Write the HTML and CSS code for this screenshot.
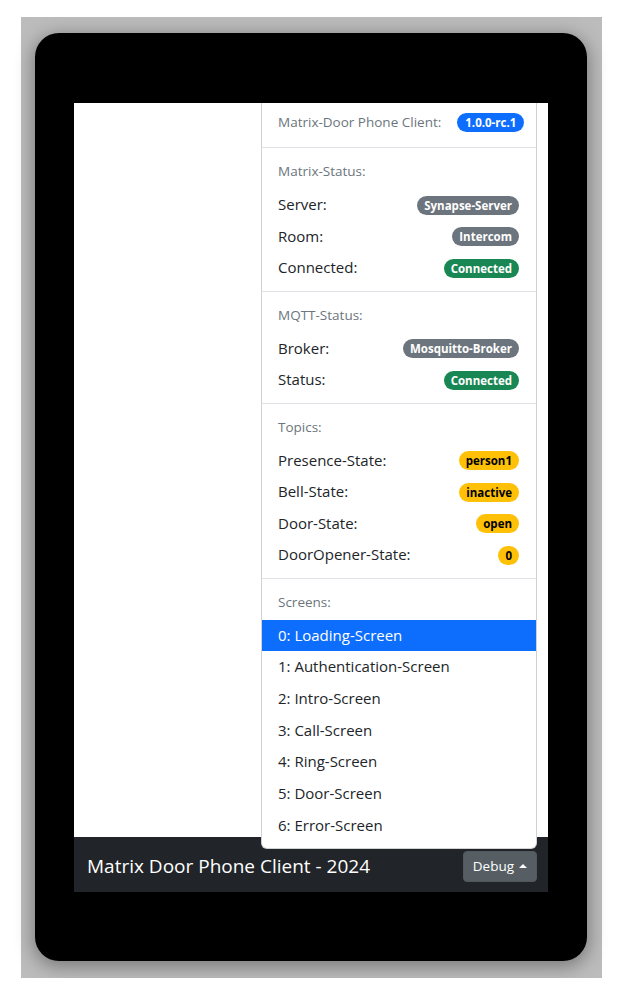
FILE: index.html
```html
<!DOCTYPE html>
<html lang="en">
<head>
<meta charset="utf-8">
<title>Matrix Door Phone Client</title>
<link rel="stylesheet" href="styles.css">
</head>
<body>
<div class="stage">
  <div class="device">
    <div class="screen">
      <main class="content"></main>
      <footer class="footer">
        <span class="footer-title">Matrix Door Phone Client - 2024</span>
        <div class="dropup">
          <ul class="menu">
            <li class="menu-header version">Matrix-Door Phone Client:<span class="badge bg-blue">1.0.0-rc.1</span></li>
            <li class="divider"></li>
            <li class="menu-header">Matrix-Status:</li>
            <li class="row"><span>Server:</span><span class="badge bg-gray">Synapse-Server</span></li>
            <li class="row"><span>Room:</span><span class="badge bg-gray">Intercom</span></li>
            <li class="row"><span>Connected:</span><span class="badge bg-green">Connected</span></li>
            <li class="divider"></li>
            <li class="menu-header">MQTT-Status:</li>
            <li class="row"><span>Broker:</span><span class="badge bg-gray">Mosquitto-Broker</span></li>
            <li class="row"><span>Status:</span><span class="badge bg-green">Connected</span></li>
            <li class="divider"></li>
            <li class="menu-header">Topics:</li>
            <li class="row"><span>Presence-State:</span><span class="badge bg-yellow">person1</span></li>
            <li class="row"><span>Bell-State:</span><span class="badge bg-yellow">inactive</span></li>
            <li class="row"><span>Door-State:</span><span class="badge bg-yellow">open</span></li>
            <li class="row"><span>DoorOpener-State:</span><span class="badge bg-yellow">0</span></li>
            <li class="divider"></li>
            <li class="menu-header">Screens:</li>
            <li class="item active">0: Loading-Screen</li>
            <li class="item">1: Authentication-Screen</li>
            <li class="item">2: Intro-Screen</li>
            <li class="item">3: Call-Screen</li>
            <li class="item">4: Ring-Screen</li>
            <li class="item">5: Door-Screen</li>
            <li class="item">6: Error-Screen</li>
          </ul>
          <button class="btn-debug" type="button">Debug<span class="caret"></span></button>
        </div>
      </footer>
    </div>
  </div>
</div>
</body>
</html>
```

FILE: styles.css
```css
* { box-sizing: border-box; }

html, body {
  margin: 0;
  padding: 0;
  background: #ffffff;
  font-family: "Open Sans", "Noto Sans", "Liberation Sans", sans-serif;
}

.stage {
  margin: 17px 20px 0 21px;
  height: 961px;
  background: #bcbcbc;
  padding: 16px 15px 17px 14px;
}

.device {
  height: 928px;
  background: #000;
  border-radius: 24px;
  padding: 70px 39px 69px 39px;
  box-shadow: 0 4px 18px 2px rgba(0, 0, 0, 0.35);
}

.screen {
  height: 789px;
  background: #fff;
  display: flex;
  flex-direction: column;
  overflow: hidden;
}

.content {
  flex: 1;
}

.footer {
  height: 55px;
  background: #212529;
  display: flex;
  align-items: center;
  justify-content: space-between;
  padding: 3px 11px 0 13px;
}

.footer-title {
  color: #fff;
  font-size: 19px;
  line-height: 24px;
}

.dropup {
  position: relative;
}

.btn-debug {
  display: flex;
  align-items: center;
  height: 31px;
  padding: 0 9px;
  border: 1px solid #51585e;
  border-radius: 4px;
  background: #565e64;
  color: #fff;
  font-family: inherit;
  font-size: 13.5px;
}

.caret {
  margin-left: 5px;
  width: 0;
  height: 0;
  border-left: 4px solid transparent;
  border-right: 4px solid transparent;
  border-bottom: 4px solid #fff;
}

.menu {
  position: absolute;
  right: 0;
  bottom: calc(100% + 2px);
  width: 276px;
  margin: 0;
  padding: 8px 0 6px;
  list-style: none;
  background: #fff;
  border: 1px solid rgba(0, 0, 0, 0.175);
  border-radius: 6px;
  color: #212529;
  font-size: 15px;
}

.menu-header {
  padding: 6px 16px 8px;
  line-height: 20px;
  font-size: 13.5px;
  color: #6c757d;
}

.menu-header.version {
  display: flex;
  align-items: center;
  gap: 16px;
  padding-right: 8px;
  white-space: nowrap;
}

.menu-header.version .badge {
  padding: 3px 8px;
}

.divider {
  height: 1px;
  margin: 7px 0;
  background: #dee2e6;
}

.row {
  display: flex;
  align-items: center;
  justify-content: space-between;
  padding: 4px 17px 4px 16px;
  line-height: 23.5px;
}

.item {
  padding: 4px 16px;
  line-height: 23.67px;
  white-space: nowrap;
}

.item.active {
  background: #0d6efd;
  color: #fff;
}

.badge {
  display: inline-block;
  padding: 3px 7px;
  border-radius: 10px;
  font-size: 11.5px;
  font-weight: 700;
  line-height: 13px;
  color: #fff;
  vertical-align: 1px;
}

.bg-blue { background: #0d6efd; }
.bg-gray { background: #6c757d; }
.bg-green { background: #198754; }
.bg-yellow { background: #ffc107; color: #000; }
```
